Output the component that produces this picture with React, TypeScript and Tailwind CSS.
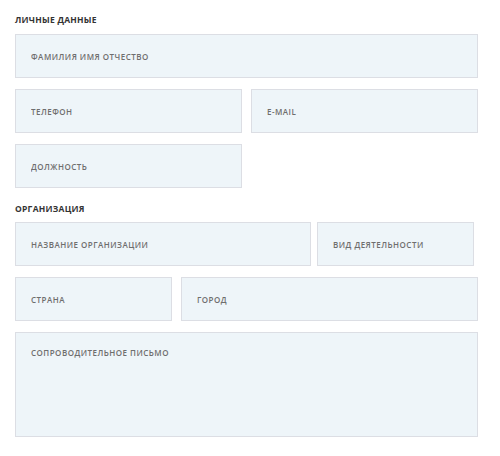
import React from "react";

const field =
  "h-[44px] bg-[#eef5f9] border border-[#dcdee4] px-[15px] text-[8px] font-semibold tracking-[0.06em] uppercase text-[#6b6b6b] placeholder:text-[#6e6e6e] outline-none";

export default function App() {
  return (
    <div
      className="w-[500px] h-[456px] bg-white px-[15px] pt-[14px]"
      style={{ fontFamily: '"Open Sans", "Noto Sans", sans-serif' }}
    >
      <h2 className="text-[8.5px] leading-[12px] font-bold uppercase text-[#333] tracking-[0.03em]">
        Личные данные
      </h2>
      <div className="mt-[8px] flex flex-col gap-[11px]">
        <input className={`${field} w-[463px]`} placeholder="Фамилия имя отчество" />
        <div className="flex gap-[9px]">
          <input className={`${field} w-[227px]`} placeholder="Телефон" />
          <input className={`${field} w-[227px]`} placeholder="E-mail" />
        </div>
        <input className={`${field} w-[227px]`} placeholder="Должность" />
      </div>

      <h2 className="mt-[15px] text-[8.5px] leading-[12px] font-bold uppercase text-[#333] tracking-[0.03em]">
        Организация
      </h2>
      <div className="mt-[7px] flex flex-col gap-[11px]">
        <div className="flex gap-[6px]">
          <input className={`${field} w-[296px]`} placeholder="Название организации" />
          <input className={`${field} w-[157px]`} placeholder="Вид деятельности" />
        </div>
        <div className="flex gap-[9px]">
          <input className={`${field} w-[157px]`} placeholder="Страна" />
          <input className={`${field} w-[297px]`} placeholder="Город" />
        </div>
        <textarea
          className={`${field} w-[463px] h-[105px] pt-[14px] resize-none`}
          placeholder="Сопроводительное письмо"
        />
      </div>
    </div>
  );
}
